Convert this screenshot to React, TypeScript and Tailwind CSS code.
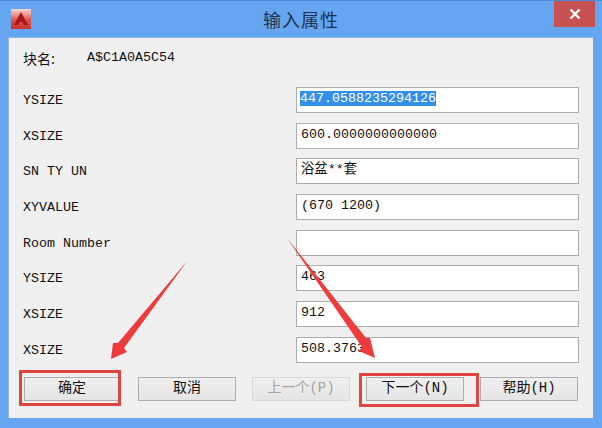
const rows = [
  { label: 'YSIZE', value: '447.0588235294126', selected: true },
  { label: 'XSIZE', value: '600.0000000000000' },
  { label: 'SN TY UN', value: '浴盆**套' },
  { label: 'XYVALUE', value: '(670 1200)' },
  { label: 'Room Number', value: '' },
  { label: 'YSIZE', value: '463' },
  { label: 'XSIZE', value: '912' },
  { label: 'XSIZE', value: '508.3763' },
]

const buttons = [
  { label: '确定', width: 'w-[96px]', gap: 'ml-px' },
  { label: '取消', width: 'w-[98px]', gap: 'ml-[18px]' },
  { label: '上一个(P)', width: 'w-[98px]', gap: 'ml-[16px]', disabled: true },
  { label: '下一个(N)', width: 'w-[98px]', gap: 'ml-[16px]' },
  { label: '帮助(H)', width: 'w-[98px]', gap: 'ml-[16px]' },
]

function AppIcon() {
  return (
    <svg width="20" height="20" viewBox="0 0 20 20">
      <defs>
        <linearGradient id="iconBg" x1="0" y1="0" x2="0" y2="1">
          <stop offset="0" stopColor="#f3d9d2" />
          <stop offset="0.55" stopColor="#e0544c" />
          <stop offset="1" stopColor="#c8302c" />
        </linearGradient>
      </defs>
      <rect width="20" height="20" fill="url(#iconBg)" />
      <path d="M10 3 L17 16 H13 L11.5 13 H8.5 L7 16 H3 Z" fill="#a8161a" />
    </svg>
  )
}

export default function App() {
  return (
    <div className="relative w-[602px] h-[428px] overflow-hidden bg-[#66a6f0] border-t border-[#4d8ad6] font-['Liberation_Mono','Noto_Sans_CJK_SC',monospace] text-[13.33px] text-[#111]">
      {/* Title bar */}
      <div className="relative h-[36px] flex items-center justify-center">
        <div className="absolute left-[11px] top-[8px]">
          <AppIcon />
        </div>
        <span className="font-['Noto_Sans_CJK_SC',sans-serif] text-[18px] tracking-[1px] text-[#1d3350]">输入属性</span>
        <div className="absolute right-[7px] top-0 w-[41px] h-[26px] bg-[#c75050] flex items-center justify-center">
          <svg width="12" height="12" viewBox="0 0 12 12">
            <path d="M1.5 1.5 L10.5 10.5 M10.5 1.5 L1.5 10.5" stroke="#fff" strokeWidth="2.4" />
          </svg>
        </div>
      </div>

      {/* Dialog body */}
      <div className="ml-[8px] w-[585px] h-[381px] bg-[#f0f0f0] border-t border-l border-[#8fb8e8] pl-[14px]">
        <div className="h-[49px] flex items-start pt-[11px]">
          <span className="w-[64px] font-['Noto_Sans_CJK_SC',sans-serif] text-[14px] leading-[18px]">块名:</span>
          <span className="leading-[18px]">A$C1A0A5C54</span>
        </div>

        <div className="flex flex-col gap-[9.7px]">
          {rows.map((row, i) => (
            <div key={i} className="flex items-center h-[26px]">
              <span className="w-[273px] mt-[2px] whitespace-pre">{row.label}</span>
              <div className="w-[283px] h-[26px] bg-white border border-[#acacac] pl-[3px] pb-[3px] flex items-center">
                <span className={row.selected ? 'bg-[#3390e8] text-white leading-[15px]' : 'pl-px leading-[15px]'}>
                  {row.value}
                </span>
              </div>
            </div>
          ))}
        </div>

        <div className="flex mt-[14px] text-[14px]">
          {buttons.map((b) => (
            <div
              key={b.label}
              className={`${b.width} ${b.gap} h-[24px] flex items-center justify-center border bg-gradient-to-b from-[#f0f0f0] to-[#e5e5e5] ${
                b.disabled ? 'border-[#d9d9d9] text-[#a3a3a3]' : 'border-[#adadad]'
              }`}
            >
              {b.label}
            </div>
          ))}
        </div>
      </div>

      {/* Red annotations */}
      <div className="absolute left-[19px] top-[369px] w-[102px] h-[36px] border-[3px] border-[#e0443f]" />
      <div className="absolute left-[359px] top-[372px] w-[120px] h-[34px] border-[3px] border-[#e0443f]" />
      <svg className="absolute left-0 top-0" width="602" height="428" viewBox="0 0 602 428">
        <polygon points="188,259 124,347 127,351 111,358 113,342 118,342" fill="#ee3b3b" />
        <polygon points="287,237 366,337 370,337 375,357 359,350 362,346" fill="#ee3b3b" />
      </svg>
    </div>
  )
}
